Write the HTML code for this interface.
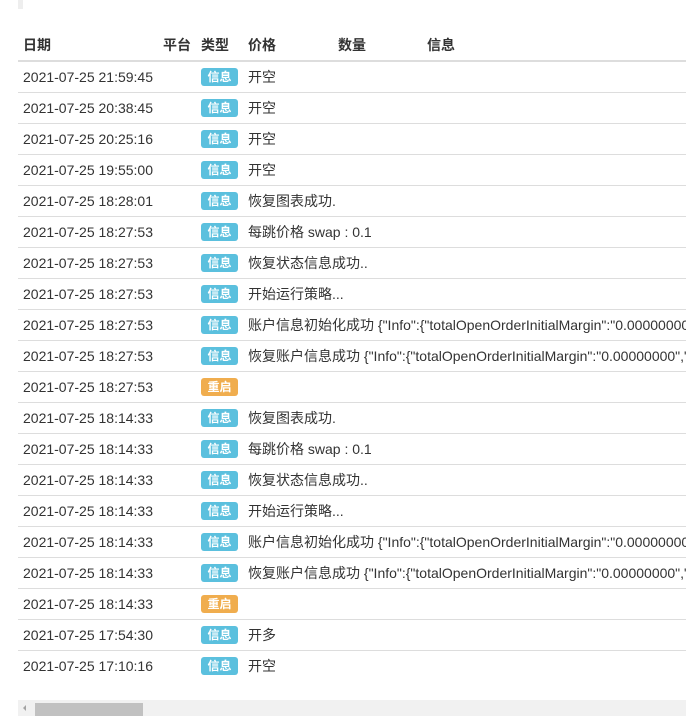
<!DOCTYPE html>
<html><head><meta charset="utf-8"><style>
html,body{margin:0;padding:0;background:#fff;width:686px;height:716px;overflow:hidden;font-family:"Liberation Sans","Noto Sans CJK SC",sans-serif;font-size:14px;color:#333}
.topbar{position:absolute;left:18px;top:0;width:5px;height:9px;background:#eee}
.wrap{position:absolute;left:18px;top:30px;width:700px}
table{border-collapse:collapse;white-space:nowrap}
th{font-weight:bold;text-align:left;height:30px;padding:0 5px;border-bottom:2px solid #ddd;vertical-align:middle}
td{height:30px;padding:0 5px;border-bottom:1px solid #ddd;vertical-align:middle}
.b{display:inline-block;color:#fff;font-size:12px;font-weight:bold;line-height:18px;height:18px;padding:0 6.5px;border-radius:3px;background:#5bc0de}
.r{background:#f0ad4e}
.sb{position:absolute;left:18px;top:700px;width:668px;height:16px;background:#f1f1f1}
.th{position:absolute;left:17px;top:3px;width:108px;height:13px;background:#c1c1c1}
.ar{position:absolute;left:5px;top:5px;width:0;height:0;border-top:3px solid transparent;border-bottom:3px solid transparent;border-right:3px solid #a3a3a3}
</style></head><body>
<div class="topbar"></div>
<div class="wrap"><table>
<tr><th style="width:130px">日期</th><th style="width:28px">平台</th><th style="width:37px;padding-left:5px">类型</th><th style="width:80px">价格</th><th style="width:79px">数量</th><th>信息</th></tr>
<tr><td>2021-07-25 21:59:45</td><td></td><td><span class="b">信息</span></td><td colspan="3">开空</td></tr>
<tr><td>2021-07-25 20:38:45</td><td></td><td><span class="b">信息</span></td><td colspan="3">开空</td></tr>
<tr><td>2021-07-25 20:25:16</td><td></td><td><span class="b">信息</span></td><td colspan="3">开空</td></tr>
<tr><td>2021-07-25 19:55:00</td><td></td><td><span class="b">信息</span></td><td colspan="3">开空</td></tr>
<tr><td>2021-07-25 18:28:01</td><td></td><td><span class="b">信息</span></td><td colspan="3">恢复图表成功.</td></tr>
<tr><td>2021-07-25 18:27:53</td><td></td><td><span class="b">信息</span></td><td colspan="3">每跳价格 swap : 0.1</td></tr>
<tr><td>2021-07-25 18:27:53</td><td></td><td><span class="b">信息</span></td><td colspan="3">恢复状态信息成功..</td></tr>
<tr><td>2021-07-25 18:27:53</td><td></td><td><span class="b">信息</span></td><td colspan="3">开始运行策略...</td></tr>
<tr><td>2021-07-25 18:27:53</td><td></td><td><span class="b">信息</span></td><td colspan="3">账户信息初始化成功 {"Info":{"totalOpenOrderInitialMargin":"0.00000000","</td></tr>
<tr><td>2021-07-25 18:27:53</td><td></td><td><span class="b">信息</span></td><td colspan="3">恢复账户信息成功 {"Info":{"totalOpenOrderInitialMargin":"0.00000000","</td></tr>
<tr><td>2021-07-25 18:27:53</td><td></td><td><span class="b r">重启</span></td><td colspan="3"></td></tr>
<tr><td>2021-07-25 18:14:33</td><td></td><td><span class="b">信息</span></td><td colspan="3">恢复图表成功.</td></tr>
<tr><td>2021-07-25 18:14:33</td><td></td><td><span class="b">信息</span></td><td colspan="3">每跳价格 swap : 0.1</td></tr>
<tr><td>2021-07-25 18:14:33</td><td></td><td><span class="b">信息</span></td><td colspan="3">恢复状态信息成功..</td></tr>
<tr><td>2021-07-25 18:14:33</td><td></td><td><span class="b">信息</span></td><td colspan="3">开始运行策略...</td></tr>
<tr><td>2021-07-25 18:14:33</td><td></td><td><span class="b">信息</span></td><td colspan="3">账户信息初始化成功 {"Info":{"totalOpenOrderInitialMargin":"0.00000000","</td></tr>
<tr><td>2021-07-25 18:14:33</td><td></td><td><span class="b">信息</span></td><td colspan="3">恢复账户信息成功 {"Info":{"totalOpenOrderInitialMargin":"0.00000000","</td></tr>
<tr><td>2021-07-25 18:14:33</td><td></td><td><span class="b r">重启</span></td><td colspan="3"></td></tr>
<tr><td>2021-07-25 17:54:30</td><td></td><td><span class="b">信息</span></td><td colspan="3">开多</td></tr>
<tr><td style="border-bottom:none">2021-07-25 17:10:16</td><td style="border-bottom:none"></td><td style="border-bottom:none"><span class="b">信息</span></td><td colspan="3" style="border-bottom:none">开空</td></tr>
</table></div>
<div class="sb"><div class="ar"></div><div class="th"></div></div>
</body></html>
